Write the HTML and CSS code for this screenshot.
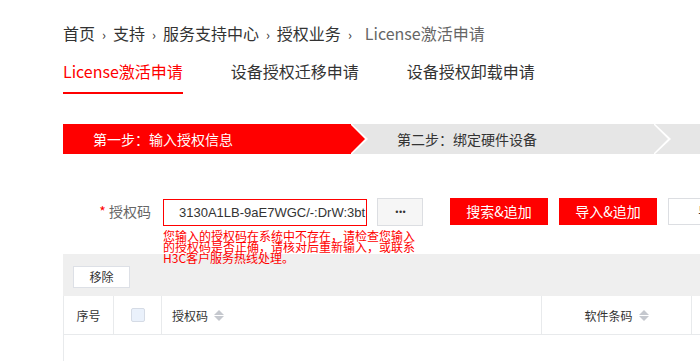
FILE: index.html
```
<!DOCTYPE html>
<html lang="zh-CN">
<head>
  <meta charset="UTF-8" />
  <meta name="viewport" content="width=device-width, initial-scale=1.0"/>
  <title>License激活申请</title>
  <link rel="stylesheet" href="styles.css">
</head>
<body>

  <div class="page">
    <!-- breadcrumb -->
    <div class="crumbs">
      <span>首页</span><i>›</i><span>支持</span><i>›</i><span>服务支持中心</span><i>›</i><span>授权业务</span><i class="end">›</i><span class="current">License激活申请</span>
    </div>

    <!-- tabs -->
    <div class="tabs">
      <div class="tab active">License激活申请</div>
      <div class="tab">设备授权迁移申请</div>
      <div class="tab">设备授权卸载申请</div>
    </div>

    <!-- steps -->
    <div class="steps">
      <div class="step done">第一步：输入授权信息</div>
      <div class="step">第二步：绑定硬件设备</div>
      <div class="step last"></div>
    </div>

    <!-- form -->
    <div class="form-row">
      <label class="label"><em>*</em> 授权码</label>
      <div class="input error">3130A1LB-9aE7WGC/-:DrW:3bt</div>
      <button class="btn more">•••</button>
      <button class="btn red first">搜索&amp;追加</button>
      <button class="btn red">导入&amp;追加</button>
      <button class="btn plain">导出</button>
    </div>
    <div class="err-msg">您输入的授权码在系统中不存在，请检查您输入的授权码是否正确，请核对后重新输入，或联系H3C客户服务热线处理。</div>

    <div class="toolbar">
      <button class="btn small">移除</button>
    </div>

    <div class="table">
      <div class="thead">
        <div class="th col-no">序号</div>
        <div class="th col-check"><span class="checkbox"></span></div>
        <div class="th col-code">授权码 <span class="sort"></span></div>
        <div class="th col-sw">软件条码 <span class="sort"></span></div>
        <div class="th col-more"></div>
      </div>
      <div class="tbody"></div>
    </div>
  </div>

</body>
</html>
```

FILE: styles.css
```
* {
  margin: 0;
  padding: 0;
  box-sizing: border-box;
}

html, body {
  overflow: hidden;
  background: #fff;
}

body {
  font-family: "Noto Sans CJK SC", "Noto Sans", sans-serif;
  color: #333;
}

.page {
  width: 1200px;
  padding: 23px 0 0 63px;
}

/* breadcrumb */
.crumbs {
  font-size: 16px;
  line-height: 20px;
  height: 20px;
  white-space: nowrap;
}

.crumbs i {
  font-style: normal;
  font-size: 13px;
  margin: 0 7px 0 7px;
}

.crumbs i.end {
  margin-right: 13px;
}

.crumbs .current {
  color: #666;
}

/* tabs */
.tabs {
  display: flex;
  gap: 48px;
  margin-top: 17px;
}

.tab {
  font-size: 16px;
  line-height: 22px;
  padding-bottom: 10px;
  border-bottom: 2px solid transparent;
  white-space: nowrap;
}

.tab.active {
  color: #f00;
  border-bottom-color: #f00;
}

/* steps */
.steps {
  display: flex;
  margin-top: 30px;
  height: 30px;
  background: #e6e6e6;
}

.step {
  position: relative;
  height: 30px;
  line-height: 30px;
  font-size: 14px;
  background: #e6e6e6;
  width: 303px;
  padding-left: 46px;
  white-space: nowrap;
}

.step.done {
  width: 288px;
  padding-left: 30px;
  background: #f00;
  color: #fff;
  z-index: 2;
}

.step.last {
  flex: 1;
}

.step::before,
.step::after {
  content: "";
  position: absolute;
  top: 0;
  height: 30px;
  clip-path: polygon(0 0, 100% 50%, 0 100%);
}

.step::before {
  right: -17px;
  width: 17px;
  top: -1px;
  height: 32px;
  background: #fff;
  z-index: 1;
}

.step::after {
  right: -14px;
  width: 15px;
  background: #e6e6e6;
  z-index: 1;
}

.step.done::after {
  background: #f00;
}

.step.last::before,
.step.last::after {
  display: none;
}

/* form */
.form-row {
  display: flex;
  align-items: flex-start;
  margin-top: 44px;
  height: 28px;
}

.label {
  width: 88px;
  text-align: right;
  font-size: 14px;
  line-height: 27px;
  color: #666;
  margin-right: 12px;
}

.label em {
  font-style: normal;
  color: #f00;
}

.input {
  width: 204px;
  height: 27px;
  margin-top: 1px;
  border: 1px solid #ddd;
  padding-left: 15px;
  font-family: "Liberation Sans", Arial, sans-serif;
  font-size: 13px;
  line-height: 25px;
  color: #333;
  white-space: nowrap;
  overflow: hidden;
}

.input.error {
  border-color: #f00;
}

.btn {
  font-family: "Noto Sans CJK SC", sans-serif;
  height: 27px;
  border: 1px solid #dcdee2;
  background: #fff;
  color: #333;
  font-size: 14px;
  line-height: 25px;
  cursor: pointer;
  white-space: nowrap;
}

.btn.more {
  width: 46px;
  height: 28px;
  margin-left: 10px;
  background: #f6f6f6;
  font-family: "DejaVu Sans", sans-serif;
  font-size: 8px;
  letter-spacing: -1px;
  color: #333;
}

.btn.red {
  width: 98px;
  margin-left: 11px;
  background: #f00;
  border-color: #f00;
  color: #fff;
}

.btn.red.first {
  margin-left: 27px;
}

.btn.plain {
  width: 98px;
  margin-left: 11px;
  text-align: left;
  padding-left: 29px;
}

.err-msg {
  width: 256px;
  margin: 4px 0 -9px 100px;
  font-size: 12px;
  line-height: 11px;
  color: #f00;
}

/* toolbar */
.toolbar {
  background: #efefef;
  padding: 9px 10px 8px;
}

.btn.small {
  width: 57px;
  height: 22px;
  font-size: 12px;
  line-height: 20px;
  border-color: #dde0e6;
}

/* table */
.table {
  border-left: 1px solid #e8eaec;
  height: 200px;
}

.thead {
  display: flex;
  height: 39px;
  border-bottom: 1px solid #e8eaec;
}

.th {
  display: flex;
  align-items: center;
  font-size: 12px;
  color: #333;
  border-right: 1px solid #e8eaec;
  white-space: nowrap;
}

.col-no {
  width: 50px;
  justify-content: center;
}

.col-check {
  width: 48px;
  justify-content: center;
}

.col-code {
  width: 380px;
  padding-left: 10px;
}

.col-sw {
  width: 150px;
  justify-content: center;
}

.col-more {
  width: 200px;
  border-right: none;
}

.checkbox {
  width: 14px;
  height: 14px;
  border: 1px solid #d5dbe5;
  border-radius: 2px;
  background: #eaf1fb;
}

.sort {
  display: inline-flex;
  flex-direction: column;
  gap: 1px;
  margin-left: 6px;
}

.sort::before,
.sort::after {
  content: "";
  width: 0;
  height: 0;
  border-left: 5px solid transparent;
  border-right: 5px solid transparent;
}

.sort::before {
  border-bottom: 5px solid #c5c8ce;
}

.sort::after {
  border-top: 5px solid #c5c8ce;
}
```
